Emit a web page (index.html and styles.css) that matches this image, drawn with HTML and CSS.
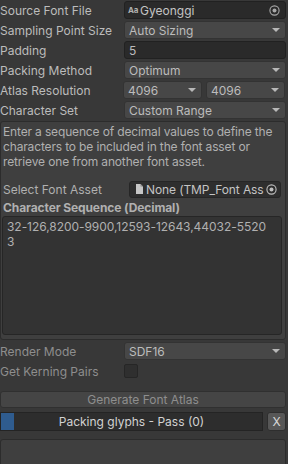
FILE: index.html
```html
<!DOCTYPE html>
<html>
<head>
<meta charset="utf-8">
<link rel="stylesheet" href="styles.css">
</head>
<body>
<div class="panel">
  <div class="row">
    <div class="label">Source Font File</div>
    <div class="field obj">
      <span class="aa">Aa</span><span class="val">Gyeonggi</span>
      <svg class="target" width="11" height="11" viewBox="0 0 11 11"><circle cx="5.5" cy="5.5" r="4.6" fill="none" stroke="#a8a8a8" stroke-width="1.1"/><circle cx="5.5" cy="5.5" r="2" fill="#a8a8a8"/></svg>
    </div>
  </div>
  <div class="row">
    <div class="label">Sampling Point Size</div>
    <div class="field pop"><span class="val">Auto Sizing</span><span class="arrow"></span></div>
  </div>
  <div class="row">
    <div class="label">Padding</div>
    <div class="field txt"><span class="val">5</span></div>
  </div>
  <div class="row">
    <div class="label">Packing Method</div>
    <div class="field pop"><span class="val">Optimum</span><span class="arrow"></span></div>
  </div>
  <div class="row">
    <div class="label">Atlas Resolution</div>
    <div class="pair">
      <div class="field pop half"><span class="val">4096</span><span class="arrow"></span></div>
      <div class="field pop half"><span class="val">4096</span><span class="arrow"></span></div>
    </div>
  </div>
  <div class="row">
    <div class="label">Character Set</div>
    <div class="field pop"><span class="val">Custom Range</span><span class="arrow"></span></div>
  </div>

  <div class="helpbox">
    <p class="help">Enter a sequence of decimal values to define the characters to be included in the font asset or retrieve one from another font asset.</p>
    <div class="row asset">
      <div class="label">Select Font Asset</div>
      <div class="field obj small">
        <svg class="doc" width="7" height="10" viewBox="0 0 7 10"><path d="M0 0H4.5L7 2.5V10H0Z" fill="#c6c6c6"/><path d="M4.5 0V2.5H7" fill="#8a8a8a"/></svg><span class="val clip">None (TMP_Font Ass</span>
        <svg class="target" width="11" height="11" viewBox="0 0 11 11"><circle cx="5.5" cy="5.5" r="4.6" fill="none" stroke="#c0c0c0" stroke-width="1.1"/><circle cx="5.5" cy="5.5" r="2" fill="#c0c0c0"/></svg>
      </div>
    </div>
    <div class="bold">Character Sequence (Decimal)</div>
    <div class="textarea">32-126,8200-9900,12593-12643,44032-5520<br>3</div>
  </div>

  <div class="row render">
    <div class="label dim">Render Mode</div>
    <div class="field pop"><span class="val">SDF16</span><span class="arrow"></span></div>
  </div>
  <div class="row">
    <div class="label dim">Get Kerning Pairs</div>
    <div class="check"></div>
  </div>

  <div class="button gen">Generate Font Atlas</div>
  <div class="progress-row">
    <div class="progress"><div class="fill" style="width:13px"></div><span class="ptext">Packing glyphs - Pass (0)</span></div>
    <div class="xbtn">X</div>
  </div>
  <div class="bottombox"></div>
</div>
</body>
</html>
```
FILE: styles.css
```css
html, body {
  margin: 0;
  padding: 0;
  background: #383838;
  overflow: hidden;
}
body {
  width: 288px;
  height: 464px;
  font-family: Inter, "Noto Sans", sans-serif;
  font-size: 12px;
  color: #c4c4c4;
}
.panel {
  display: flex;
  flex-direction: column;
}
.row {
  display: flex;
  align-items: center;
  height: 20px;
}
.label {
  width: 124px;
  flex: none;
  padding-left: 0;
  white-space: nowrap;
  color: #bcbcbc;
}
.label.dim { color: #8e8e8e; }
.field {
  position: relative;
  box-sizing: border-box;
  width: 162px;
  height: 18px;
  border-radius: 3px;
  display: flex;
  align-items: center;
  padding-left: 4px;
  white-space: nowrap;
  overflow: hidden;
}
.pop {
  background: #474747;
  border: 1px solid #333333;
  color: #bcbcbc;
}
.pop .arrow {
  position: absolute;
  right: 5px;
  top: 6px;
  width: 0;
  height: 0;
  border-left: 4px solid transparent;
  border-right: 4px solid transparent;
  border-top: 4px solid #b8b8b8;
}
.txt {
  background: #2a2a2a;
  border: 1px solid #212121;
  color: #bcbcbc;
}
.obj {
  background: #2a2a2a;
  border: 1px solid #212121;
  color: #c4c4c4;
  padding-left: 3px;
}
.aa {
  font-size: 8px;
  font-weight: 700;
  color: #b0b0b0;
  margin-right: 2px;
  letter-spacing: -0.3px;
}
.target {
  position: absolute;
  right: 5px;
  top: 3px;
}
.pair {
  display: flex;
  gap: 4px;
}
.field.half {
  width: 79px;
}
.pair .half:first-child { margin-left: -1px; }

.helpbox {
  box-sizing: border-box;
  margin-top: 1px;
  width: 286px;
  height: 219px;
  background: #3f3f3f;
  border: 1px solid #2c2c2c;
  border-radius: 3px;
  padding: 2px 0 0 2px;
}
.help {
  margin: 0;
  line-height: 15px;
  font-size: 12px;
  letter-spacing: -0.15px;
  color: #b0b0b0;
  width: 280px;
}
.row.asset {
  margin-top: 11px;
  height: 18px;
}
.asset .label { width: 126px; color: #b0b0b0; }
.field.small {
  width: 152px;
  height: 17px;
  background: #2e2e2e;
  border-color: #262626;
  padding-left: 6px;
  padding-right: 16px;
}
.clip {
  overflow: hidden;
  letter-spacing: -0.1px;
}
.doc { margin-right: 3px; flex: none; }
.small .target { right: 3px; top: 2px; }
.bold {
  font-weight: 700;
  color: #b0b0b0;
  height: 17px;
  line-height: 17px;
  margin-top: 1px;
  letter-spacing: -0.1px;
}
.textarea {
  box-sizing: border-box;
  width: 280px;
  height: 119px;
  margin-left: -1px;
  background: #333333;
  border: 1px solid #262626;
  border-radius: 3px;
  padding: 2px 4px;
  line-height: 15px;
  color: #b0b0b0;
  letter-spacing: -0.05px;
}
.row.render { margin-top: 1px; }
.check {
  box-sizing: border-box;
  width: 14px;
  height: 14px;
  background: #2f2f2f;
  border: 1px solid #262626;
  border-radius: 2px;
}
.button {
  box-sizing: border-box;
  height: 17px;
  width: 286px;
  margin-top: 10px;
  background: #454545;
  border: 1px solid #303030;
  border-radius: 3px;
  text-align: center;
  line-height: 15px;
  color: #8e8e8e;
}
.progress-row {
  display: flex;
  margin-top: 4px;
  gap: 4px;
  height: 19px;
}
.progress {
  position: relative;
  box-sizing: border-box;
  width: 263px;
  height: 19px;
  background: #2d2d2d;
  border: 1px solid #242424;
  display: flex;
  align-items: center;
  justify-content: center;
}
.fill {
  position: absolute;
  left: 0;
  top: 0;
  bottom: 0;
  background: #2f5c8f;
}
.ptext {
  position: relative;
  color: #d2d2d2;
}
.xbtn {
  box-sizing: border-box;
  width: 19px;
  height: 19px;
  background: #575757;
  border: 1px solid #2e2e2e;
  border-radius: 3px;
  text-align: center;
  line-height: 17px;
  color: #d8d8d8;
}
.bottombox {
  box-sizing: border-box;
  margin-top: 8px;
  width: 286px;
  height: 40px;
  background: #3f3f3f;
  border: 1px solid #2c2c2c;
  border-radius: 3px;
}
```
